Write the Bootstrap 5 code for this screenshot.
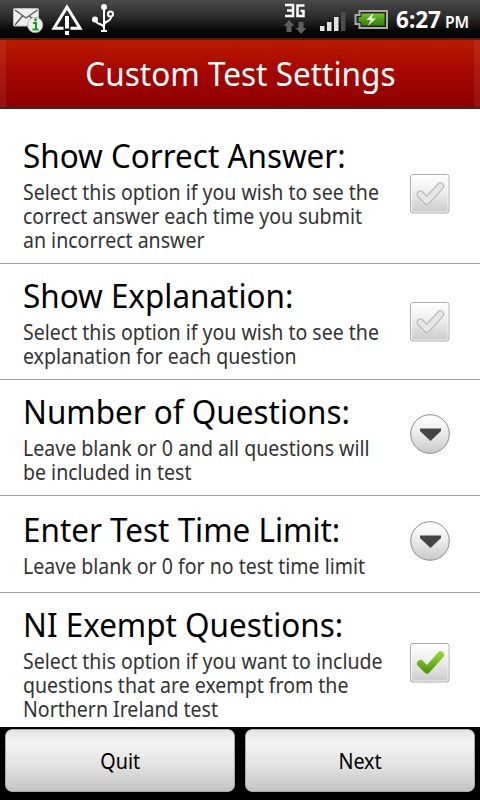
<!DOCTYPE html>
<html lang="en">
<head>
<meta charset="utf-8">
<meta name="viewport" content="width=device-width, initial-scale=1">
<title>Custom Test Settings</title>
<link href="https://cdn.jsdelivr.net/npm/bootstrap@5.3.0/dist/css/bootstrap.min.css" rel="stylesheet">
<style>
body{font-family:"Noto Sans","Open Sans",sans-serif;height:800px;overflow:hidden;background:#000}
.app{width:480px;height:800px}
.statusbar{height:38px;background:linear-gradient(#4b4b4b,#2b2b2b 45%,#080808 80%,#000)}
.statusbar svg{display:block}
.clock{font:700 23px/38px "Noto Sans",sans-serif;color:#fff;white-space:nowrap;width:75px;padding-left:1px}
.clock small{font-size:16px;font-weight:600;margin-left:-2px}
.squeeze{display:inline-block;transform:scaleX(.93);transform-origin:left;white-space:nowrap}
.clock .squeeze{transform:scaleX(.98)}
.titlebar{height:71px;border-top:2px solid #5a1a0a;border-bottom:2px solid #4a2020;background:linear-gradient(90deg,#ffffff12 6px,transparent 6px 474px,#ffffff12 474px),linear-gradient(#b81a00,#a50600 50%,#8c0000)}
.titlebar h1{font-size:33px;line-height:67px;color:#fff}
.titlebar .squeeze{transform-origin:center;transform:scaleX(.955)}
.settings{height:618px;padding-top:15px;background:#fff}
.setting{padding:12px 29px 11px 23px;border-bottom:1px solid #a0a0a0}
.setting h2{font-size:33px;line-height:40px;margin:0 0 4px;color:#000;font-weight:400}
.setting h2 .squeeze{transform:scaleX(.952)}
.setting p{font-size:21px;line-height:24px;margin:0;color:#333}
.label-col{flex:1 1 0;min-width:0}
.single{height:97px;padding-top:13px;padding-bottom:14px}
.ctl{width:42px;height:42px;flex:none}
.raised{margin-top:-8px}
.single .raised{margin-top:-6px}
.actions{height:73px;padding:2px 5px 9px;gap:10px}
.actions .btn{height:63px;border:1px solid #aaa;border-radius:7px;background:linear-gradient(#e4e4e4,#f4f4f4 22%,#e4e4e4 55%,#c4c4c4);color:#000;font-size:21px;line-height:1;padding:2px 0 0}
.actions .squeeze{transform-origin:center;transform:scaleX(.94)}
</style>
<script src="https://cdn.jsdelivr.net/npm/bootstrap@5.3.0/dist/js/bootstrap.bundle.min.js"></script>
</head>
<body>
<svg width="0" height="0" class="position-absolute">
<defs>
<linearGradient id="face" x2="0" y2="1"><stop stop-color="#fff"/><stop offset=".4" stop-color="#f0f0f0"/><stop offset="1" stop-color="#cacaca"/></linearGradient>
<linearGradient id="green" x2="0" y2="1"><stop stop-color="#8fd030"/><stop offset="1" stop-color="#569c12"/></linearGradient>
<linearGradient id="cell" x2="0" y2="1"><stop stop-color="#79c52c"/><stop offset=".5" stop-color="#4aa015"/><stop offset="1" stop-color="#39800b"/></linearGradient>
<symbol id="box" viewBox="0 0 42 42"><rect x="1.5" y="1.5" width="38.5" height="38.5" rx="2.5" fill="url(#face)" stroke="#aaa"/><rect x="2.5" y="2.5" width="36.500" height="36.500" rx="2" fill="none" stroke="#fff" stroke-opacity=".7"/></symbol>
<symbol id="tick-off" viewBox="0 0 42 42"><path d="M11.500 21.500L18 28L31.500 13" fill="none" stroke="#b4b4b4" stroke-width="7.500" stroke-linecap="round" stroke-linejoin="round"/><path d="M11.500 21.500L18 28L31.500 13" fill="none" stroke="#e6e6e6" stroke-width="5.500" stroke-linecap="round" stroke-linejoin="round"/></symbol>
<symbol id="drop" viewBox="0 0 42 42"><circle cx="21" cy="21" r="19.3" fill="url(#face)" stroke="#8c8c8c"/><path d="M11 15.500H32V18L21.500 28L11 18Z" fill="#444"/></symbol>
</defs>
</svg>
<div class="app d-flex flex-column">
<header class="statusbar d-flex">
<svg width="395" height="38" viewBox="0 0 395 38">
<g><rect x="13.500" y="8.500" width="25" height="17.500" rx="1" fill="#eee" stroke="#bbb"/><path d="M15 10L26 18L37.500 10M15 25L22.500 16M37.500 25L29.500 16" fill="none" stroke="#555" stroke-width="1.300"/><circle cx="35.200" cy="25" r="7.700" fill="#eee" stroke="#999" stroke-width=".7"/><path d="M33 23H36V29M32.500 29.500H38.500" fill="none" stroke="#10a010" stroke-width="2"/><circle cx="35.500" cy="19.800" r="1.500" fill="#10a010"/></g>
<path d="M67 7L54 28.200H80Z" fill="none" stroke="#fff" stroke-width="3"/><path d="M67 16V30" stroke="#151515" stroke-width="7"/><path d="M67 16V28.500" stroke="#fff" stroke-width="4"/><rect x="65" y="31" width="4" height="4" fill="#fff"/>
<g fill="none" stroke="#fff" stroke-width="2"><path d="M104 8V30M95.500 20C95.500 25 104 23 104 28M111 16.500C111 23 104 20 104 25"/><circle cx="110.500" cy="14" r="2.500"/></g><circle cx="104" cy="7" r="3" fill="#fff"/><circle cx="95" cy="19.500" r="3" fill="#fff"/><rect x="101" y="30" width="6" height="2" fill="#fff"/>
<path d="M285 5H293V16H285M287 10.500H293M304.500 5.500H297.500V16H303.500V11H300.500" fill="none" stroke="#fff" stroke-width="2.500"/>
<path d="M289 20L294.500 26H291.500V32H286.500V26H283.500ZM301 34L295.500 28H298.500V22H303.500V28H306.500Z" fill="#5e5e5e"/>
<g fill="#e2e2e2"><rect x="320" y="26" width="4.500" height="5"/><rect x="327" y="22" width="4.500" height="9"/><rect x="334" y="17" width="4.500" height="14"/><rect x="341" y="12" width="4.500" height="19" fill="#4c4c4c"/></g>
<path d="M359.500 11H387V28H359.500V24H355.500V15H359.500Z" fill="#222" stroke="#aaa" stroke-width="2"/><path d="M361.500 13.500H384.500V25.500H361.500V22H358.500V17H361.500Z" fill="url(#cell)"/><path d="M373.500 13L366.500 20H371L367.500 26L376 18.500H371.500Z" fill="#fff"/>
</svg>
<div class="clock"><span class="squeeze">6:27 <small>PM</small></span></div>
</header>
<div class="titlebar text-center"><h1 class="m-0 fw-normal"><span class="squeeze">Custom Test Settings</span></h1></div>
<main class="settings overflow-hidden">
<section class="setting d-flex align-items-center"><div class="label-col"><h2><span class="squeeze">Show Correct Answer:</span></h2><p><span class="squeeze">Select this option if you wish to see the<br>correct answer each time you submit<br>an incorrect answer</span></p></div>
<svg class="ctl"><use href="#box"/><use href="#tick-off"/></svg></section>
<section class="setting d-flex align-items-center"><div class="label-col"><h2><span class="squeeze">Show Explanation:</span></h2><p><span class="squeeze">Select this option if you wish to see the<br>explanation for each question</span></p></div>
<svg class="ctl"><use href="#box"/><use href="#tick-off"/></svg></section>
<section class="setting d-flex align-items-center"><div class="label-col"><h2><span class="squeeze">Number of Questions:</span></h2><p><span class="squeeze">Leave blank or 0 and all questions will<br>be included in test</span></p></div>
<svg class="ctl raised"><use href="#drop"/></svg></section>
<section class="setting single d-flex align-items-center"><div class="label-col"><h2><span class="squeeze">Enter Test Time Limit:</span></h2><p><span class="squeeze">Leave blank or 0 for no test time limit</span></p></div>
<svg class="ctl raised"><use href="#drop"/></svg></section>
<section class="setting d-flex align-items-center"><div class="label-col"><h2><span class="squeeze">NI Exempt Questions:</span></h2><p><span class="squeeze">Select this option if you want to include<br>questions that are exempt from the<br>Northern Ireland test</span></p></div>
<svg class="ctl"><use href="#box"/><path d="M11.500 21.500L18 28L31.500 13" fill="none" stroke="url(#green)" stroke-width="7" stroke-linecap="round" stroke-linejoin="round"/></svg></section>
</main>
<footer class="actions d-flex"><button class="btn flex-fill w-50"><span class="squeeze">Quit</span></button><button class="btn flex-fill w-50"><span class="squeeze">Next</span></button></footer>
</div>
</body>
</html>
